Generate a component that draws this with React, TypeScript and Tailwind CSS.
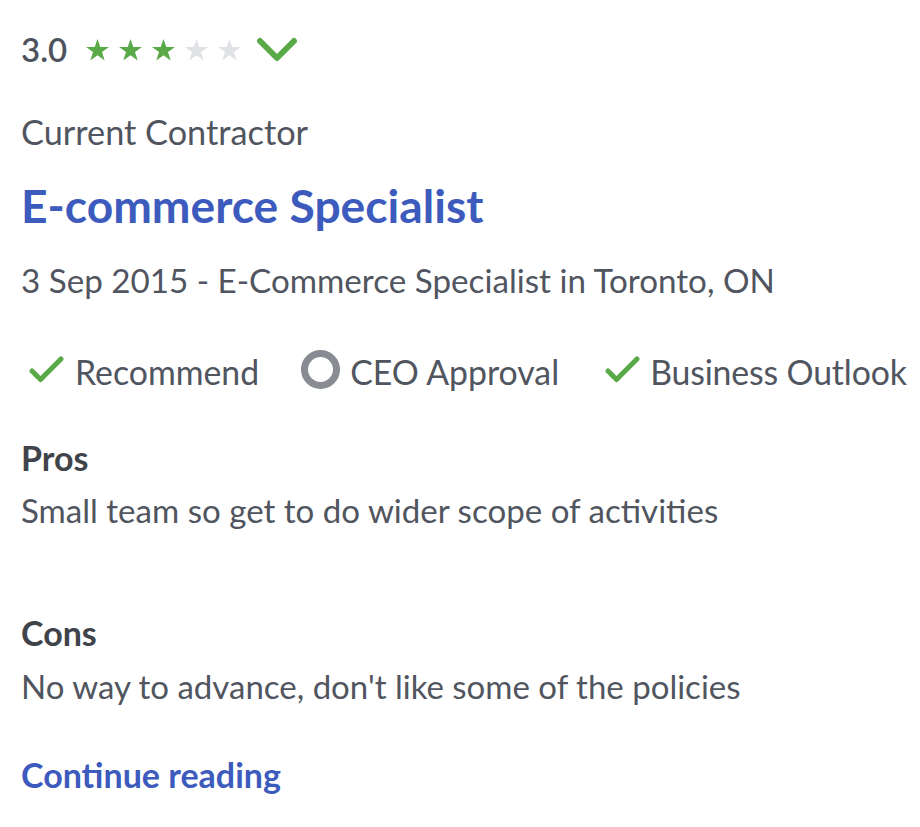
function Star({ filled }: { filled: boolean }) {
  return (
    <svg viewBox="0 0 24 23" className={`w-[23px] h-[22px] ${filled ? 'fill-[#5aa949]' : 'fill-[#e1e2e6]'}`}>
      <path d="M12 0l2.9 8.4H24l-7.3 5.3 2.8 8.8L12 17.1l-7.5 5.4 2.8-8.8L0 8.4h9.1z" />
    </svg>
  )
}

function Tick() {
  return (
    <svg viewBox="0 0 36 28" className="w-[36px] h-[28px] shrink-0">
      <path d="M3 15l8.5 8.5L32 3" fill="none" stroke="#5aa949" strokeWidth="5" strokeLinecap="round" strokeLinejoin="round" />
    </svg>
  )
}

export default function App() {
  return (
    <div className="min-h-screen bg-white px-[21px] pt-[30px] text-[#505560] font-['Lato','Noto_Sans',sans-serif]">
      {/* Rating */}
      <div className="flex items-center h-[40px]">
        <span className="text-[33px] font-semibold text-[#4d525c]">3.0</span>
        <div className="flex items-center gap-[10px] ml-[19px]">
          <Star filled />
          <Star filled />
          <Star filled />
          <Star filled={false} />
          <Star filled={false} />
        </div>
        <svg viewBox="0 0 42 26" className="w-[42px] h-[26px] ml-[15px]">
          <path d="M4 4l17 17L38 4" fill="none" stroke="#5aa949" strokeWidth="6" strokeLinecap="round" strokeLinejoin="round" />
        </svg>
      </div>

      <p className="mt-[40px] text-[34.3px] leading-[44px]">Current Contractor</p>
      <h2 className="mt-[25px] text-[46.2px] leading-[52px] font-bold text-[#3d5bbd]">E-commerce Specialist</h2>
      <p className="mt-[27px] text-[33.2px] leading-[44px]">3 Sep 2015 - E-Commerce Specialist in Toronto, ON</p>

      <div className="flex items-center mt-[48px] h-[44px] text-[33.8px] leading-[44px] whitespace-nowrap">
        <span className="ml-[8px] mr-[10px] -mt-[4px] shrink-0"><Tick /></span>
        <span className="shrink-0">Recommend</span>
        <span className="ml-[42px] mr-[10px] -mt-[6px] w-[39px] h-[39px] rounded-full border-[7px] border-[#888b91] shrink-0" />
        <span className="shrink-0">CEO Approval</span>
        <span className="ml-[46px] mr-[9px] -mt-[4px] shrink-0"><Tick /></span>
        <span className="shrink-0 tracking-[-0.15px]">Business Outlook</span>
      </div>

      <h3 className="mt-[42px] text-[34px] leading-[44px] font-bold text-[#3f434a]">Pros</h3>
      <p className="mt-[8px] text-[33.1px] leading-[44px]">Small team so get to do wider scope of activities</p>

      <h3 className="mt-[79px] text-[34px] leading-[44px] font-bold text-[#3f434a]">Cons</h3>
      <p className="mt-[9px] text-[33px] leading-[44px]">No way to advance, don't like some of the policies</p>

      <p className="mt-[45px] text-[34px] leading-[44px] font-bold text-[#3d5bbd]">Continue reading</p>
    </div>
  )
}
